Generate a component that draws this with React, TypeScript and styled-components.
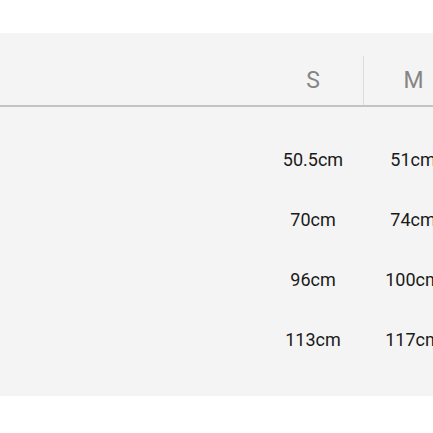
import React from 'react';
import styled, { createGlobalStyle } from 'styled-components';

const GlobalStyle = createGlobalStyle`
  html, body {
    margin: 0;
    padding: 0;
    background: #ffffff;
    overflow: hidden;
  }
  body {
    font-family: Roboto, "Noto Sans", sans-serif;
  }
`;

const Page = styled.div`
  width: 433px;
  height: 433px;
  padding-top: 33px;
  box-sizing: border-box;
  overflow: hidden;
`;

const Panel = styled.div`
  background: #f4f4f4;
  width: 100%;
  padding-bottom: 27px;
`;

const Grid = styled.div`
  display: grid;
  grid-template-columns: 263px 100px 100px;
  width: 463px;
`;

const HeaderRow = styled.div`
  display: contents;
`;

const HeadCell = styled.div`
  height: 74px;
  box-sizing: border-box;
  border-bottom: 2px solid #c4c4c4;
  display: flex;
  align-items: flex-end;
  justify-content: center;
  font-size: 23px;
  color: #858585;
`;

const HeadLabel = styled.div<{ $divider?: boolean }>`
  width: 100%;
  height: 49px;
  display: flex;
  align-items: center;
  justify-content: center;
  border-left: ${(p) => (p.$divider ? '1px solid #dcdcdc' : 'none')};
  box-sizing: border-box;
`;

const Spacer = styled.div`
  grid-column: 1 / -1;
  height: 22px;
`;

const Cell = styled.div`
  height: 60px;
  display: flex;
  align-items: center;
  justify-content: center;
  font-size: 18px;
  color: #1a1a1a;
`;

const sizes = ['S', 'M'];
const rows = [
  ['50.5cm', '51cm'],
  ['70cm', '74cm'],
  ['96cm', '100cm'],
  ['113cm', '117cm'],
];

const App: React.FC = () => {
  return (
    <Page>
      <GlobalStyle />
      <Panel>
        <Grid>
          <HeaderRow>
            <HeadCell />
            {sizes.map((s, i) => (
              <HeadCell key={s}>
                <HeadLabel $divider={i > 0}>{s}</HeadLabel>
              </HeadCell>
            ))}
          </HeaderRow>
          <Spacer />
          {rows.map((r, i) => (
            <React.Fragment key={i}>
              <Cell />
              {r.map((v) => (
                <Cell key={v}>{v}</Cell>
              ))}
            </React.Fragment>
          ))}
        </Grid>
      </Panel>
    </Page>
  );
};

export default App;
